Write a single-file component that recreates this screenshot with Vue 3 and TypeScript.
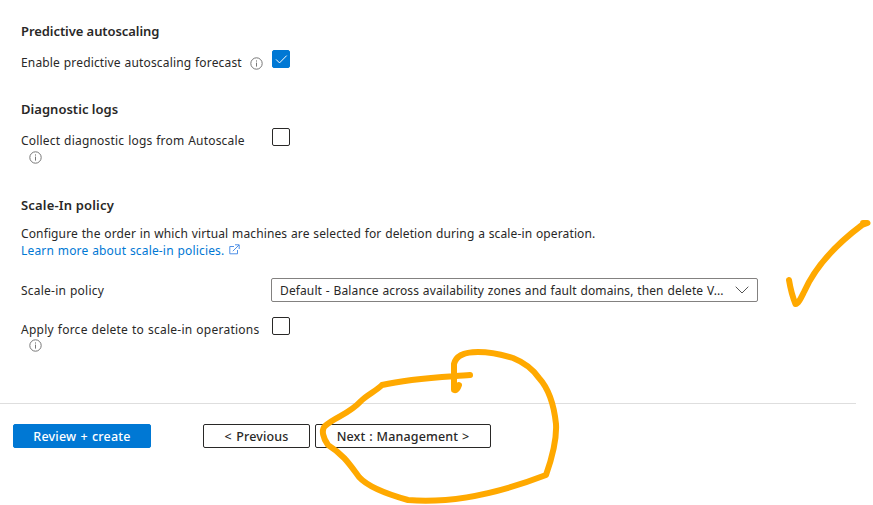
<script setup lang="ts">
import { ref } from 'vue'

const forecast = ref(true)
const collectLogs = ref(false)
const forceDelete = ref(false)
const policy = 'Default - Balance across availability zones and fault domains, then delete V...'
</script>

<template>
  <main class="page">
    <section class="section predictive">
      <h2 class="t-predictive">Predictive autoscaling</h2>
      <div class="row">
        <div class="label"><span class="t-forecast">Enable predictive autoscaling forecast</span>
          <svg class="info" viewBox="0 0 13 13"><circle cx="6.5" cy="6.5" r="5.7" /><path d="M6.5 5.6v4M6.5 3.4v1.2" /></svg>
        </div>
        <button class="check" :class="{ on: forecast }" role="checkbox" :aria-checked="forecast" @click="forecast = !forecast">
          <svg v-if="forecast" viewBox="0 0 18 18"><path d="M4 9.4l3.5 3.5L14.7 5.6" /></svg>
        </button>
      </div>
    </section>

    <section class="section diagnostic">
      <h2 class="t-diag">Diagnostic logs</h2>
      <div class="row">
        <div class="label stacked"><span class="t-collect">Collect diagnostic logs from Autoscale</span>
          <svg class="info" viewBox="0 0 13 13"><circle cx="6.5" cy="6.5" r="5.7" /><path d="M6.5 5.6v4M6.5 3.4v1.2" /></svg>
        </div>
        <button class="check" :class="{ on: collectLogs }" role="checkbox" :aria-checked="collectLogs" @click="collectLogs = !collectLogs">
          <svg v-if="collectLogs" viewBox="0 0 18 18"><path d="M4 9.4l3.5 3.5L14.7 5.6" /></svg>
        </button>
      </div>
    </section>

    <section class="section scale">
      <h2 class="t-scale">Scale-In policy</h2>
      <p class="desc"><span class="t-desc">Configure the order in which virtual machines are selected for deletion during a scale-in operation.</span></p>
      <a class="learn"><span class="t-learn">Learn more about scale-in policies.</span>
        <svg class="external" viewBox="0 0 11 11"><path d="M5 2.5H.8v7.3h7.7V6M6 .8h4.2V5M10 1L3.8 7.2" /></svg>
      </a>
      <div class="row policy-row">
        <div class="label"><span class="t-policy">Scale-in policy</span></div>
        <div class="select">
          <span class="t-select">{{ policy }}</span>
          <svg viewBox="0 0 14 8"><path d="M.7 .7L7 7l6.3-6.3" /></svg>
        </div>
      </div>
      <div class="row force-row">
        <div class="label stacked"><span class="t-force">Apply force delete to scale-in operations</span>
          <svg class="info" viewBox="0 0 13 13"><circle cx="6.5" cy="6.5" r="5.7" /><path d="M6.5 5.6v4M6.5 3.4v1.2" /></svg>
        </div>
        <button class="check" :class="{ on: forceDelete }" role="checkbox" :aria-checked="forceDelete" @click="forceDelete = !forceDelete">
          <svg v-if="forceDelete" viewBox="0 0 18 18"><path d="M4 9.4l3.5 3.5L14.7 5.6" /></svg>
        </button>
      </div>
    </section>

    <footer class="footer">
      <button class="btn primary"><span class="t-review">Review + create</span></button>
      <button class="btn previous"><span class="t-prev">&lt; Previous</span></button>
      <button class="btn next"><span class="t-next">Next : Management &gt;</span></button>
    </footer>

    <svg class="ink" viewBox="0 0 873 505">
      <path d="M789 280C790.500 289 793 298 795.500 304C798 304.500 801 298 804 292C815 267 838 243 862 225L867.500 223H863" />
      <path d="M470 375C446 377 412 378 382 385C376 391 367 395 361 401C348 415 336 416 325 426C321 430 323 438 328 445C344 455 350 465 359 477C368 487 390 495 408 500C456 504 502 492 546 475C552 458 557 441 556 424C554 405 549 389 539 378C532 368 523 362 513 358C500 354 489 352 478 352C465 352 456 355 454 364V390C457 391 458 388 459 385" />
    </svg>
  </main>
</template>

<style>
body {
  background: #fff;
}
</style>

<style scoped>
.page {
  position: relative;
  box-sizing: border-box;
  width: 873px;
  height: 505px;
  padding-top: 21px;
  overflow: hidden;
  color: #292827;
  font: 12px/17px "Noto Sans", sans-serif;
}
.section { padding-left: 21px; }
.predictive { height: 78px; }
.diagnostic { height: 96px; }
.scale { height: 208px; }
h2 {
  width: max-content;
  margin: 0;
  font-size: 13px;
  font-weight: 600;
  line-height: 20px;
}
.row {
  display: grid;
  grid-template-columns: 251px 1fr;
  align-items: start;
  margin-top: 9px;
}
.label {
  display: flex;
  align-items: center;
  padding-top: 4px;
}
.label span, .desc span, .learn span, .select span, .btn span { white-space: nowrap; }
.label span, .desc span, .learn span, .select span { word-spacing: .5px; }
.t-predictive { letter-spacing: -.07px; }
.t-diag { letter-spacing: .03px; }
.t-scale { letter-spacing: .17px; }
.t-forecast { letter-spacing: .16px; }
.t-collect { letter-spacing: .2px; }
.t-desc { letter-spacing: .125px; }
.t-learn { letter-spacing: .165px; }
.t-policy { letter-spacing: .23px; }
.t-select { letter-spacing: .12px; }
.t-force { letter-spacing: .25px; }
.t-review { letter-spacing: .2px; word-spacing: .7px; }
.t-prev { letter-spacing: .15px; word-spacing: 1px; }
.t-next { letter-spacing: .15px; word-spacing: .4px; }
.info {
  flex: none;
  width: 13px;
  height: 13px;
  margin: 2px 0 0 8px;
  fill: none;
  stroke: #777;
  stroke-width: 1;
}
.stacked {
  flex-direction: column;
  align-items: flex-start;
}
.check {
  display: block;
  box-sizing: border-box;
  width: 18px;
  height: 18px;
  padding: 0;
  background: #fff;
  border: 1px solid #292827;
  border-radius: 2px;
}
.check.on {
  background: #0078d4;
  border-color: #0078d4;
}
.check svg {
  display: block;
  width: 18px;
  height: 18px;
  margin: -1px;
  fill: none;
  stroke: #fff;
}
.desc { margin: 10px 0 0; height: 17px; }
.learn {
  display: flex;
  align-items: center;
  height: 17px;
  color: #0078d4;
}
.external {
  width: 11px;
  height: 11px;
  margin: -3px 0 0 5px;
  fill: none;
  stroke: #3c84e4;
  stroke-width: .9;
}
.policy-row {
  grid-template-columns: 250px 1fr;
  margin-top: 19px;
}
.select {
  display: flex;
  align-items: center;
  justify-content: space-between;
  box-sizing: border-box;
  width: 487px;
  height: 24px;
  padding: 0 8px;
  border: 1px solid #838180;
  border-radius: 2px;
}
.select svg {
  width: 14px;
  height: 8px;
  fill: none;
  stroke: #555;
}
.force-row { margin-top: 15px; }
.force-row .info { margin-top: 1px; }
.footer {
  display: flex;
  box-sizing: border-box;
  width: 856px;
  padding: 20px 0 0 13px;
  border-top: 1px solid #dedede;
}
.btn {
  box-sizing: border-box;
  display: flex;
  align-items: center;
  justify-content: center;
  height: 24px;
  padding: 0;
  border: 1px solid #292827;
  border-radius: 2px;
  background: #fff;
  color: #292827;
  font: 500 12.500px/17px "Noto Sans", sans-serif;
}
.primary {
  width: 138px;
  background: #0078d4;
  border-color: #0078d4;
  color: #fff;
}
.previous { width: 107px; margin-left: 52px; }
.next { width: 176px; margin-left: 5px; }
.ink {
  position: absolute;
  inset: 0;
  width: 873px;
  height: 505px;
  pointer-events: none;
  fill: none;
  stroke: #ffa900;
  stroke-width: 6;
  stroke-linecap: round;
  stroke-linejoin: round;
}
</style>
